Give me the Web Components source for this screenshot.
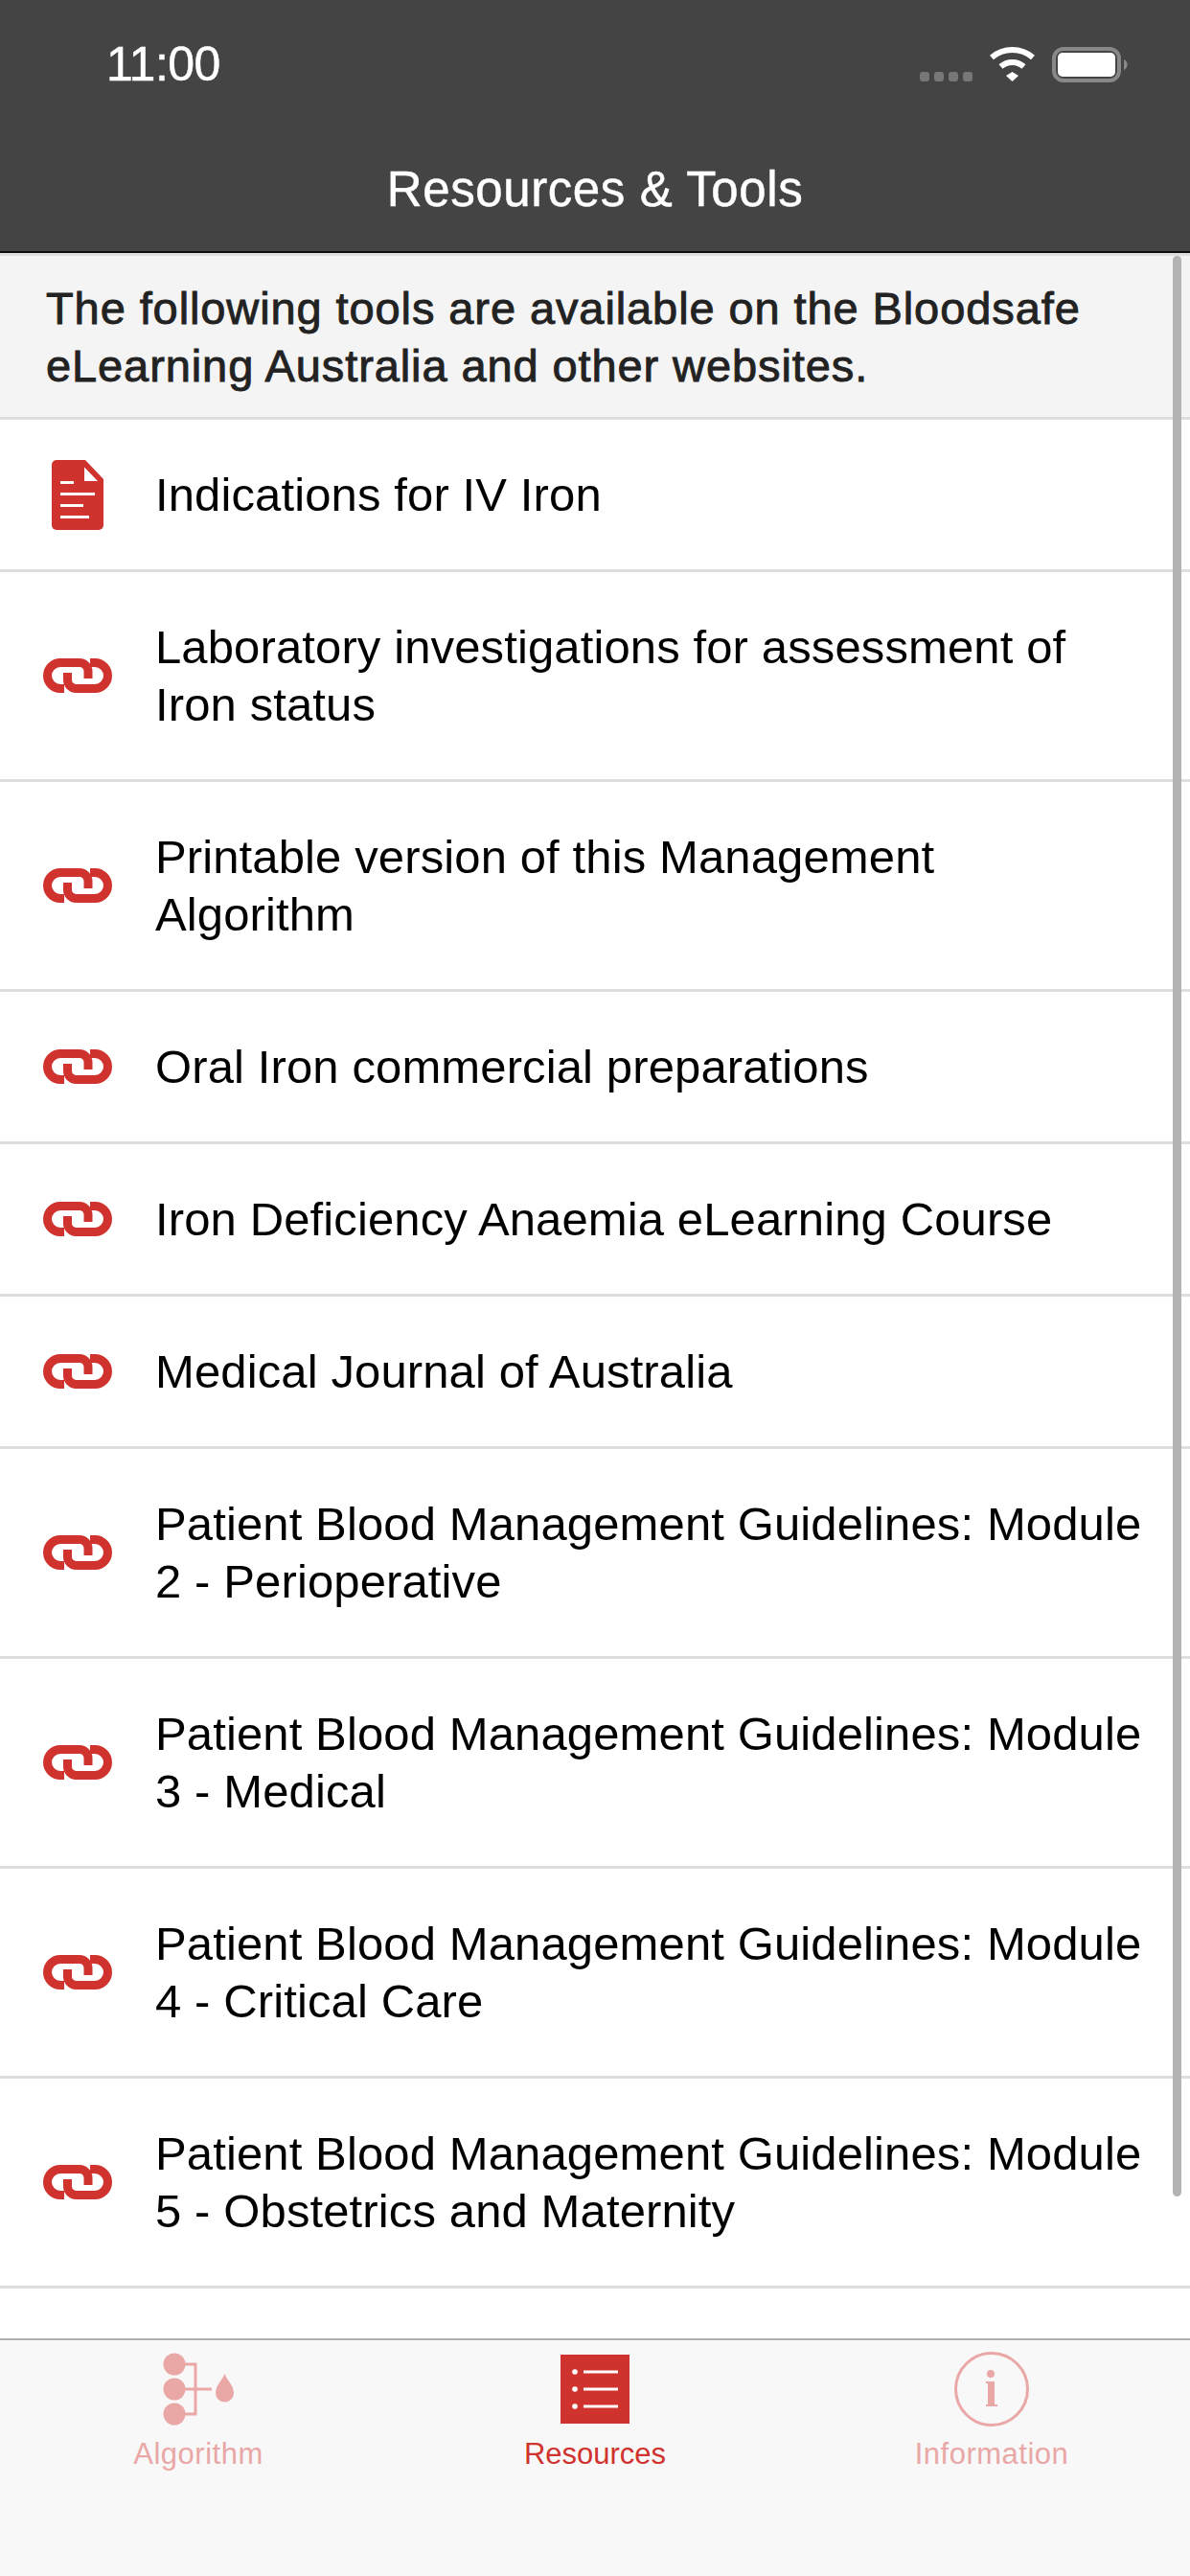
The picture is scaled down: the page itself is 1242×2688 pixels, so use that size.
<!DOCTYPE html>
<html>
<head>
<meta charset="utf-8">
<title>Resources &amp; Tools</title>
<style>
  html, body { margin: 0; padding: 0; }
  body { width: 1242px; height: 2688px; overflow: hidden; background: #fff; font-family: "Liberation Sans", Arial, sans-serif; }
  .screen { display: flex; flex-direction: column; height: 2688px; }
</style>
</head>
<body>
<div class="screen">
  <app-header title="Resources &amp; Tools" time="11:00"></app-header>
  <res-list>
    <res-intro>The following tools are available on the Bloodsafe eLearning Australia and other websites.</res-intro>
    <res-row icon="doc">Indications for IV Iron</res-row>
    <res-row>Laboratory investigations for assessment of<br>Iron status</res-row>
    <res-row>Printable version of this Management<br>Algorithm</res-row>
    <res-row>Oral Iron commercial preparations</res-row>
    <res-row>Iron Deficiency Anaemia eLearning Course</res-row>
    <res-row>Medical Journal of Australia</res-row>
    <res-row>Patient Blood Management Guidelines: Module<br>2 - Perioperative</res-row>
    <res-row>Patient Blood Management Guidelines: Module<br>3 - Medical</res-row>
    <res-row>Patient Blood Management Guidelines: Module<br>4 - Critical Care</res-row>
    <res-row>Patient Blood Management Guidelines: Module<br>5 - Obstetrics and Maternity</res-row>
  </res-list>
  <tab-bar>
    <tab-item icon="algorithm" label="Algorithm"></tab-item>
    <tab-item icon="resources" label="Resources" active></tab-item>
    <tab-item icon="info" label="Information"></tab-item>
  </tab-bar>
</div>

<script>
// Status bar + navigation bar
class AppHeader extends HTMLElement {
  constructor() {
    super();
    this.attachShadow({ mode: 'open' });
  }

  connectedCallback() {
    this.shadowRoot.innerHTML = `
      <style>
        :host { display: block; flex: none; height: 262px; background: #444; border-bottom: 2px solid #0c0c0c; color: #fff; }
        .status { height: 135px; display: flex; justify-content: space-between; align-items: flex-start; padding: 0 56px 0 111px; }
        .time { font-size: 50px; line-height: 56px; margin-top: 39px; letter-spacing: -0.5px; -webkit-text-stroke: 0.5px #fff; }
        .icons { margin-top: 48px; display: block; }
        h1 { margin: 0; font-size: 51px; letter-spacing: 0.6px; font-weight: 400; line-height: 60px; text-align: center; padding-top: 33px; -webkit-text-stroke: 0.5px #fff; }
      </style>
      <div class="status">
        <span class="time">${this.getAttribute('time')}</span>
        <svg class="icons" width="226" height="40" viewBox="0 0 226 40">
          <g fill="#777">
            <rect x="0" y="27" width="10" height="10" rx="3"/>
            <rect x="15" y="27" width="10" height="10" rx="3"/>
            <rect x="30" y="27" width="10" height="10" rx="3"/>
            <rect x="45" y="27" width="10" height="10" rx="3"/>
          </g>
          <g fill="none" stroke="#fff" stroke-width="6">
            <path d="M75 12 A33 33 0 0 1 118 12"/>
            <path d="M84.5 21.500 A18 18 0 0 1 108.500 21.500"/>
          </g>
          <path d="M90 31 L96.500 27 L103 31 L96.500 37 Z" fill="#fff"/>
          <rect x="140" y="3" width="68" height="33" rx="10" fill="none" stroke="#888" stroke-width="4"/>
          <rect x="144" y="7" width="60" height="25" rx="5" fill="#fff"/>
          <path d="M213 14 A6 6 0 0 1 213 25 Z" fill="#888"/>
        </svg>
      </div>
      <h1>${this.getAttribute('title').replace('&', '&amp;')}</h1>
    `;
  }
}

// Scroll area with the overlay scrollbar
class ResList extends HTMLElement {
  constructor() {
    super();
    this.attachShadow({ mode: 'open' });
    this.shadowRoot.innerHTML = `
      <style>
        :host { display: block; flex: 1; min-height: 0; position: relative; overflow: hidden; }
        .thumb { position: absolute; top: 3px; right: 9px; width: 9px; height: 2025px; border-radius: 5px; background: #b3b3b3; }
      </style>
      <slot></slot>
      <div class="thumb"></div>
    `;
  }
}

class ResIntro extends HTMLElement {
  constructor() {
    super();
    this.attachShadow({ mode: 'open' });
    this.shadowRoot.innerHTML = `
      <style>
        :host { display: block; background: #f4f4f4; border-top: 3px solid #dedede; border-bottom: 3px solid #dedede; padding: 25px 48px 23px; height: 120px; color: #222; font-size: 47px; letter-spacing: 0.9px; -webkit-text-stroke: 0.9px #222; line-height: 60px; }
      </style>
      <slot></slot>
    `;
  }
}

const LINK_ICON = `
  <svg width="72" height="36" viewBox="0 0 72 36" fill="none" stroke="#d0322e" stroke-width="9">
    <path d="M22 31.500 H18 A13.500 13.500 0 0 1 18 4.500 H38 A9 9 0 0 1 47 13.500 V21"/>
    <path d="M25.500 15 V22 A9 9 0 0 0 34.500 31.500 H54 A13.500 13.500 0 0 0 54 4.500 H49"/>
  </svg>`;

const DOC_ICON = `
  <svg width="54" height="73" viewBox="0 0 54 73">
    <path d="M5 0 H35 L54 20 V68 A5 5 0 0 1 49 73 H5 A5 5 0 0 1 0 68 V5 A5 5 0 0 1 5 0 Z" fill="#d0322e"/>
    <path d="M34 7.500 L48 22 H34 Z" fill="#fff"/>
    <rect x="9" y="22" width="14" height="3" fill="#fff"/>
    <rect x="9" y="34" width="36" height="3" fill="#fff"/>
    <rect x="9" y="46" width="24" height="3" fill="#fff"/>
    <rect x="9" y="58" width="30" height="3" fill="#fff"/>
  </svg>`;

class ResRow extends HTMLElement {
  constructor() {
    super();
    this.attachShadow({ mode: 'open' });
  }

  connectedCallback() {
    const icon = this.getAttribute('icon') === 'doc' ? DOC_ICON : LINK_ICON;
    this.shadowRoot.innerHTML = `
      <style>
        :host { display: flex; align-items: center; border-bottom: 3px solid #dedede; background: #fff; color: #000; font-size: 49px; letter-spacing: 0.12px; line-height: 60px; }
        .icon { flex: none; width: 162px; display: flex; justify-content: center; }
        .icon svg { display: block; flex: none; }
        .text { flex: 1; padding: 48px 0; white-space: nowrap; }
      </style>
      <div class="icon">${icon}</div>
      <div class="text"><slot></slot></div>
    `;
  }
}

class TabBar extends HTMLElement {
  constructor() {
    super();
    this.attachShadow({ mode: 'open' });
    this.shadowRoot.innerHTML = `
      <style>
        :host { display: grid; grid-template-columns: repeat(3, 1fr); flex: none; height: 246px; background: #f8f8f8; border-top: 2px solid #b0b0b0; }
      </style>
      <slot></slot>
    `;
  }
}

class TabItem extends HTMLElement {
  constructor() {
    super();
    this.attachShadow({ mode: 'open' });
  }

  connectedCallback() {
    const active = this.hasAttribute('active');
    const icons = {
      algorithm: `
        <svg width="74" height="76" viewBox="0 0 74 76" fill="currentColor">
          <g fill="none" stroke="currentColor" stroke-width="3">
            <path d="M12 12 H34 V64 H12"/>
            <path d="M12 38 H51"/>
          </g>
          <circle cx="12" cy="12" r="11.500"/>
          <circle cx="12" cy="38" r="11.500"/>
          <circle cx="12" cy="64" r="11.500"/>
          <path d="M64.500 22 C67 29 74 34 74 42 A9.500 9.500 0 0 1 55 42 C55 34 62 29 64.500 22 Z"/>
        </svg>`,
      resources: `
        <svg width="72" height="72" viewBox="0 0 72 72">
          <rect width="72" height="72" fill="currentColor"/>
          <g fill="#fff">
            <circle cx="15" cy="18" r="2.800"/><rect x="24" y="16.500" width="36" height="3"/>
            <circle cx="15" cy="36" r="2.800"/><rect x="24" y="34.500" width="36" height="3"/>
            <circle cx="15" cy="54" r="2.800"/><rect x="24" y="52.500" width="36" height="3"/>
          </g>
        </svg>`,
      info: `
        <svg width="78" height="78" viewBox="0 0 78 78" fill="currentColor">
          <circle cx="39" cy="39" r="37.500" fill="none" stroke="currentColor" stroke-width="3"/>
          <circle cx="38" cy="23" r="4"/>
          <rect x="35" y="31" width="7" height="25"/>
          <rect x="33" y="31" width="4" height="2"/>
          <rect x="33" y="55" width="12" height="2"/>
        </svg>`
    };
    this.shadowRoot.innerHTML = `
      <style>
        :host { display: flex; flex-direction: column; align-items: center; color: ${active ? '#d0322e' : '#e9a7a6'}; font-size: 31px; letter-spacing: ${active ? '0' : '0.5px'}; line-height: 36px; }
        .icon { height: 84px; margin-top: 9px; display: flex; align-items: center; }
        svg { display: block; }
        .label { margin-top: 8px; }
      </style>
      <div class="icon">${icons[this.getAttribute('icon')]}</div>
      <div class="label">${this.getAttribute('label')}</div>
    `;
  }
}

customElements.define('app-header', AppHeader);
customElements.define('res-list', ResList);
customElements.define('res-intro', ResIntro);
customElements.define('res-row', ResRow);
customElements.define('tab-bar', TabBar);
customElements.define('tab-item', TabItem);
</script>
</body>
</html>
